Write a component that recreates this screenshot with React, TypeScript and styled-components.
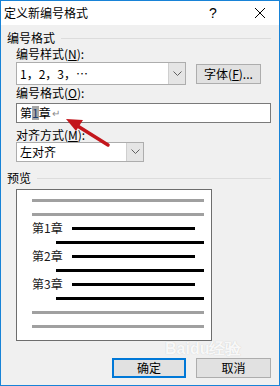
import styled, { createGlobalStyle } from 'styled-components';

const GlobalStyle = createGlobalStyle`
  body {
    margin: 0;
    font-family: "Noto Sans CJK SC", "Noto Sans", sans-serif;
    font-size: 12px;
    color: #000;
  }
`;

const Window = styled.div`
  position: relative;
  width: 280px;
  height: 386px;
  box-sizing: border-box;
  border: 1px solid #1883d7;
  background: #f0f0f0;
  display: flex;
  flex-direction: column;
`;

const TitleBar = styled.div`
  height: 24px;
  background: #fff;
  display: flex;
  align-items: center;
  padding-left: 3px;
  font-size: 12px;
  line-height: 14px;
`;

const TitleText = styled.span`
  flex: 1;
`;

const HelpMark = styled.span`
  width: 14px;
  margin-right: 22px;
  font-family: "Liberation Sans", sans-serif;
  font-size: 14px;
`;

const CloseBox = styled.div`
  width: 30px;
  display: flex;
  justify-content: center;
  margin-right: 4px;
`;

const Body = styled.div`
  display: flex;
  flex-direction: column;
  padding: 0 8px 0 6px;
`;

const GroupHeader = styled.div<{ $top: number }>`
  display: flex;
  align-items: center;
  gap: 6px;
  margin-top: ${({ $top }) => $top}px;
  line-height: 14px;
  &::after {
    content: '';
    flex: 1;
    height: 1px;
    background: #dcdcdc;
  }
`;

const Label = styled.div<{ $top: number }>`
  margin: ${({ $top }) => $top}px 0 0 9px;
  line-height: 14px;
  white-space: nowrap;
`;

const Row = styled.div<{ $top: number }>`
  display: flex;
  align-items: center;
  gap: 10px;
  margin: ${({ $top }) => $top}px 0 0 9px;
  height: 23px;
`;

const Combo = styled.div<{ $width: number; $height: number }>`
  width: ${({ $width }) => $width}px;
  height: ${({ $height }) => $height}px;
  box-sizing: border-box;
  border: 1px solid #adadad;
  background: #fff;
  display: flex;
  align-items: stretch;
  margin-left: ${({ $width }) => ($width < 150 ? 9 : 0)}px;
`;

const ComboText = styled.div`
  flex: 1;
  display: flex;
  align-items: center;
  padding-left: 3px;
  line-height: 14px;
  white-space: nowrap;
`;

const ComboArrow = styled.div`
  width: 16px;
  background: #e5e5e5;
  border-left: 1px solid #cfcfcf;
  display: flex;
  align-items: center;
  justify-content: center;
`;

const PushButton = styled.div<{ $width: number; $default?: boolean }>`
  width: ${({ $width }) => $width}px;
  height: 20px;
  box-sizing: border-box;
  background: #e1e1e1;
  border: ${({ $default }) => ($default ? '2px solid #0078d7' : '1px solid #adadad')};
  display: flex;
  align-items: center;
  justify-content: center;
  line-height: 14px;
  white-space: nowrap;
`;

const TextInput = styled.div`
  margin: 3px 0 0 9px;
  width: 255px;
  height: 20px;
  box-sizing: border-box;
  border: 1px solid #7a7a7a;
  background: #fff;
  display: flex;
  align-items: center;
  padding-left: 3px;
  line-height: 14px;
`;

const Highlight = styled.span`
  background: #a6a6a6;
  color: #1a3a6a;
`;

const ReturnMark = styled.span`
  color: #8a8a8a;
  font-size: 10px;
  margin-left: 1px;
`;

const PreviewBox = styled.div`
  margin: 4px 0 0 9px;
  width: 196px;
  height: 152px;
  box-sizing: border-box;
  border: 1px solid #6d6d6d;
  background: #fff;
  padding: 3px 7px 7px 15px;
  display: flex;
  flex-direction: column;
`;

const PreviewRow = styled.div<{ $indent?: number }>`
  height: 14px;
  display: flex;
  align-items: center;
  padding-left: ${({ $indent }) => $indent ?? 0}px;
`;

const Bar = styled.div<{ $gray?: boolean; $width?: number }>`
  height: 3px;
  background: ${({ $gray }) => ($gray ? '#a0a0a0' : '#000')};
  flex: ${({ $width }) => ($width ? 'none' : 1)};
  width: ${({ $width }) => ($width ? `${$width}px` : 'auto')};
`;

const ChapterLabel = styled.span`
  width: 40px;
  font-size: 12px;
  line-height: 14px;
  color: #1a1a1a;
`;

const ButtonBar = styled.div`
  display: flex;
  justify-content: flex-end;
  gap: 10px;
  margin-top: 17px;
`;

const Watermark = styled.div`
  position: absolute;
  left: 164px;
  top: 339px;
  line-height: 17px;
  color: rgba(255, 255, 255, 0.9);
  text-shadow: 0 0 1px #c4c4c4;
  font-family: "Liberation Sans", sans-serif;
  font-weight: bold;
  font-size: 16px;
  pointer-events: none;
`;

const Overlay = styled.svg`
  position: absolute;
  left: -1px;
  top: -1px;
  pointer-events: none;
`;

const chapters = ['第1章', '第2章', '第3章'];

export default function App() {
  return (
    <>
      <GlobalStyle />
      <Window>
        <TitleBar>
          <TitleText>定义新编号格式</TitleText>
          <HelpMark>?</HelpMark>
          <CloseBox>
            <svg width="12" height="12" viewBox="0 0 12 12">
              <path d="M1 1 L11 11 M11 1 L1 11" stroke="#000" strokeWidth="1" fill="none" />
            </svg>
          </CloseBox>
        </TitleBar>
        <Body>
          <GroupHeader $top={6}>编号格式</GroupHeader>
          <Label $top={2}>
            编号样式(<u>N</u>):
          </Label>
          <Row $top={1}>
            <Combo $width={170} $height={23}>
              <ComboText>1，2，3，…</ComboText>
              <ComboArrow>
                <svg width="9" height="6" viewBox="0 0 9 6">
                  <path d="M0.5 0.5 L4.5 4.5 L8.5 0.5" stroke="#606060" fill="none" />
                </svg>
              </ComboArrow>
            </Combo>
            <PushButton $width={65}>
              字体(<u>F</u>)...
            </PushButton>
          </Row>
          <Label $top={1}>
            编号格式(<u>O</u>):
          </Label>
          <TextInput>
            第<Highlight>1</Highlight>章<ReturnMark>↵</ReturnMark>
          </TextInput>
          <Label $top={5}>
            对齐方式(<u>M</u>):
          </Label>
          <Combo $width={128} $height={20}>
            <ComboText>左对齐</ComboText>
            <ComboArrow>
              <svg width="9" height="6" viewBox="0 0 9 6">
                <path d="M0.5 0.5 L4.5 4.5 L8.5 0.5" stroke="#606060" fill="none" />
              </svg>
            </ComboArrow>
          </Combo>
          <GroupHeader $top={9}>预览</GroupHeader>
          <PreviewBox>
            <PreviewRow>
              <Bar $gray />
            </PreviewRow>
            <PreviewRow>
              <Bar $gray />
            </PreviewRow>
            {chapters.map((c) => (
              <div key={c}>
                <PreviewRow>
                  <ChapterLabel>{c}</ChapterLabel>
                  <Bar $width={123} />
                </PreviewRow>
                <PreviewRow $indent={24}>
                  <Bar />
                </PreviewRow>
              </div>
            ))}
            <PreviewRow>
              <Bar $gray />
            </PreviewRow>
            <PreviewRow>
              <Bar $gray />
            </PreviewRow>
          </PreviewBox>
          <ButtonBar>
            <PushButton $width={74} $default>
              确定
            </PushButton>
            <PushButton $width={75}>取消</PushButton>
          </ButtonBar>
        </Body>
        <Watermark>Baidu经验</Watermark>
        <Overlay width="280" height="386" viewBox="0 0 280 386">
          <line x1="108" y1="145" x2="76" y2="125" stroke="#c3161c" strokeWidth="3.5" strokeLinecap="round" />
          <polygon points="66,119 83,120 76,131" fill="#c3161c" />
        </Overlay>
      </Window>
    </>
  );
}
